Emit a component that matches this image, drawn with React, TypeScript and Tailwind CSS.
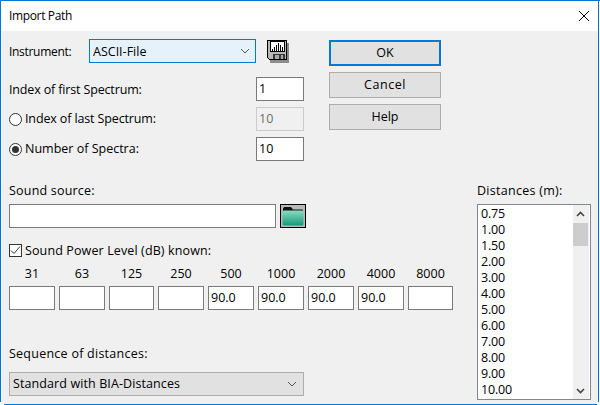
const font = "font-['Open_Sans','Liberation_Sans',sans-serif]";

function Field({ value = "", w = "w-[48px]", disabled = false }: { value?: string; w?: string; disabled?: boolean }) {
  return (
    <div
      className={`${w} h-[24px] border flex items-center pl-[2px] pb-[1px] ${
        disabled ? "border-[#cccccc] bg-[#f0f0f0] text-[#6d6d6d]" : "border-[#7a7a7a] bg-white text-black"
      }`}
    >
      {value}
    </div>
  );
}

function Chevron({ color = "#555555" }: { color?: string }) {
  return (
    <svg width="10" height="6" viewBox="0 0 10 6" fill="none">
      <path d="M1 1l4 4 4-4" stroke={color} strokeWidth="1" />
    </svg>
  );
}

function Radio({ checked }: { checked: boolean }) {
  return (
    <div className="w-[13px] h-[13px] rounded-full border border-[#333333] bg-white flex items-center justify-center">
      {checked && <div className="w-[7px] h-[7px] rounded-full bg-[#333333]" />}
    </div>
  );
}

function DiskIcon() {
  return (
    <svg width="22" height="23" viewBox="0 0 22 23" shapeRendering="crispEdges">
      <path d="M3 3h19v20H3z" fill="#8c8c8c" />
      <path d="M0.5 0.5h19v19h-17l-2-2z" fill="#b8b8b8" stroke="#000000" />
      <path d="M3.5 1.5h14v10h-14z" fill="#ffffff" stroke="#000000" />
      <path d="M5 9h1v2H5zM7 7h1v4H7zM9 5h1v6H9zM11 3h1v8h-1zM13 5h1v6h-1zM15 7h1v4h-1z" fill="#000000" />
      <path d="M6 14h12v5H6z" fill="#3a3a3a" />
      <path d="M8 15h4v4H8zM14 15h2v4h-2z" fill="#a8a8a8" />
    </svg>
  );
}

function FolderIcon() {
  return (
    <svg width="22" height="20" viewBox="0 0 22 20">
      <defs>
        <linearGradient id="fold" x1="0" y1="0" x2="0" y2="1">
          <stop offset="0" stopColor="#8adcc2" />
          <stop offset="0.5" stopColor="#4cbc9c" />
          <stop offset="1" stopColor="#16977a" />
        </linearGradient>
      </defs>
      <path d="M1 5V2.5L2 1h7l2 2.5h9.5L21 5z" fill="#111111" />
      <rect x="0.5" y="4.5" width="21" height="15" rx="1.5" fill="url(#fold)" />
    </svg>
  );
}

const freqs = [
  ["31", "", "w-[46px]"],
  ["63", "", "w-[46px]"],
  ["125", "", "w-[45px]"],
  ["250", "", "w-[46px]"],
  ["500", "90.0", "w-[46px]"],
  ["1000", "90.0", "w-[46px]"],
  ["2000", "90.0", "w-[46px]"],
  ["4000", "90.0", "w-[46px]"],
  ["8000", "", "w-[45px]"],
];

const distances = ["0.75", "1.00", "1.50", "2.00", "3.00", "4.00", "5.00", "6.00", "7.00", "8.00", "9.00", "10.00"];

function Button({ label, primary = false, track = "" }: { label: string; primary?: boolean; track?: string }) {
  return (
    <div
      className={`w-[112px] h-[26px] flex items-center justify-center bg-[#e1e1e1] ${track} ${
        primary ? "border-2 border-[#0078d7]" : "border border-[#adadad]"
      }`}
    >
      {label}
    </div>
  );
}

export default function App() {
  return (
    <div className={`${font} w-[600px] h-[405px] bg-white text-[12.5px] leading-[16px] text-black overflow-hidden`}>
      <div className="border-t border-[#0078d7]">
        <div className="h-[401px] flex flex-col w-[599px] border-l border-r border-[#0078d7] bg-[#f0f0f0]">
          <div className="h-[30px] shrink-0 bg-white flex items-center justify-between pl-[8px] pr-[9px]">
            <span className="text-[12px] tracking-[-0.36px]">Import Path</span>
            <svg width="10" height="10" viewBox="0 0 10 10" fill="none">
              <path d="M0 0l10 10M10 0L0 10" stroke="#000000" strokeWidth="1" />
            </svg>
          </div>

          <div className="flex pl-[8px] pt-[8px]">
            <div className="w-[295px]">
              <div className="flex items-center h-[24px]">
                <span className="w-[80px] text-[12px] tracking-[-0.3px] pt-[1px]">Instrument:</span>
                <div className="w-[167px] h-[24px] border border-[#0078d7] bg-[#e5f1fb] flex items-center justify-between pl-[3px] pr-[5px]">
                  <span className="pt-[1px]">ASCII-File</span>
                  <Chevron />
                </div>
                <div className="ml-[11px]">
                  <DiskIcon />
                </div>
              </div>
              <div className="flex items-center justify-between mt-[14px]">
                <span className="tracking-[-0.15px] pt-[1px]">Index of first Spectrum:</span>
                <Field value="1" />
              </div>
              <div className="flex items-center justify-between mt-[6px]">
                <span className="flex items-center gap-[3px] tracking-[-0.13px]">
                  <Radio checked={false} />
                  Index of last Spectrum:
                </span>
                <Field value="10" disabled />
              </div>
              <div className="flex items-center justify-between mt-[6px]">
                <span className="flex items-center gap-[3px]">
                  <Radio checked />
                  Number of Spectra:
                </span>
                <Field value="10" />
              </div>
            </div>
            <div className="ml-[25px] mt-[1px] flex flex-col gap-[6px]">
              <Button label="OK" primary />
              <Button label="Cancel" track="tracking-[0.58px]" />
              <Button label="Help" />
            </div>
          </div>

          <div className="flex pl-[8px] mt-[22px]">
            <div className="w-[468px]">
              <div className="h-[16px] tracking-[0.2px]">Sound source:</div>
              <div className="flex mt-[5px] gap-[4px]">
                <Field w="w-[267px]" />
                <div className="w-[26px] h-[24px] border border-black bg-[#b9b9b9] flex items-center justify-center">
                  <FolderIcon />
                </div>
              </div>
              <div className="flex items-center gap-[3px] mt-[16px] h-[13px]">
                <div className="w-[13px] h-[13px] border border-[#333333] bg-white flex items-center justify-center">
                  <svg width="11" height="11" viewBox="0 0 11 11" fill="none">
                    <path d="M1 5.5l3 3 6-7" stroke="#333333" strokeWidth="1" />
                  </svg>
                </div>
                <span className="tracking-[0.12px]">Sound Power Level (dB) known:</span>
              </div>
              <div className="flex gap-[4px] mt-[9px]">
                {freqs.map(([label, value, w]) => (
                  <div key={label} className={w}>
                    <div className="text-center h-[16px]">{label}</div>
                    <div className="mt-[4px]">
                      <Field value={value} w={w} />
                    </div>
                  </div>
                ))}
              </div>
              <div className="mt-[36px] h-[16px] tracking-[0.25px]">Sequence of distances:</div>
              <div className="mt-[10px] w-[295px] h-[24px] border border-[#adadad] bg-[#e1e1e1] flex items-center justify-between pl-[3px] pr-[6px]">
                <span className="tracking-[0.1px]">Standard with BIA-Distances</span>
                <Chevron />
              </div>
            </div>
            <div className="w-[114px]">
              <div className="h-[16px] tracking-[0.28px]">Distances (m):</div>
              <div className="mt-[5px] h-[196px] border border-[#828790] bg-white flex">
                <div className="flex-1 pl-[3px] pt-[1px] tracking-[-0.2px]">
                  {distances.map((d) => (
                    <div key={d} className="h-[16px]">
                      {d}
                    </div>
                  ))}
                </div>
                <div className="w-[16px] mr-[1px] bg-[#f0f0f0] flex flex-col items-start">
                  <div className="h-[17px] w-[15px] flex items-center justify-center">
                    <svg width="9" height="6" viewBox="0 0 9 6" fill="none">
                      <path d="M1 5l3.5-3.5L8 5" stroke="#444444" strokeWidth="1.6" />
                    </svg>
                  </div>
                  <div className="w-[15px] h-[23px] mt-[1px] bg-[#cdcdcd] mb-auto" />
                  <div className="h-[17px] w-[15px] flex items-center justify-center">
                    <svg width="9" height="6" viewBox="0 0 9 6" fill="none">
                      <path d="M1 1l3.5 3.5L8 1" stroke="#444444" strokeWidth="1.6" />
                    </svg>
                  </div>
                </div>
              </div>
            </div>
          </div>
        </div>
        <div className="h-[3px] ml-[4px] mr-[3px] bg-[#f0f0f0] border-b border-[#0078d7]" />
      </div>
    </div>
  );
}
